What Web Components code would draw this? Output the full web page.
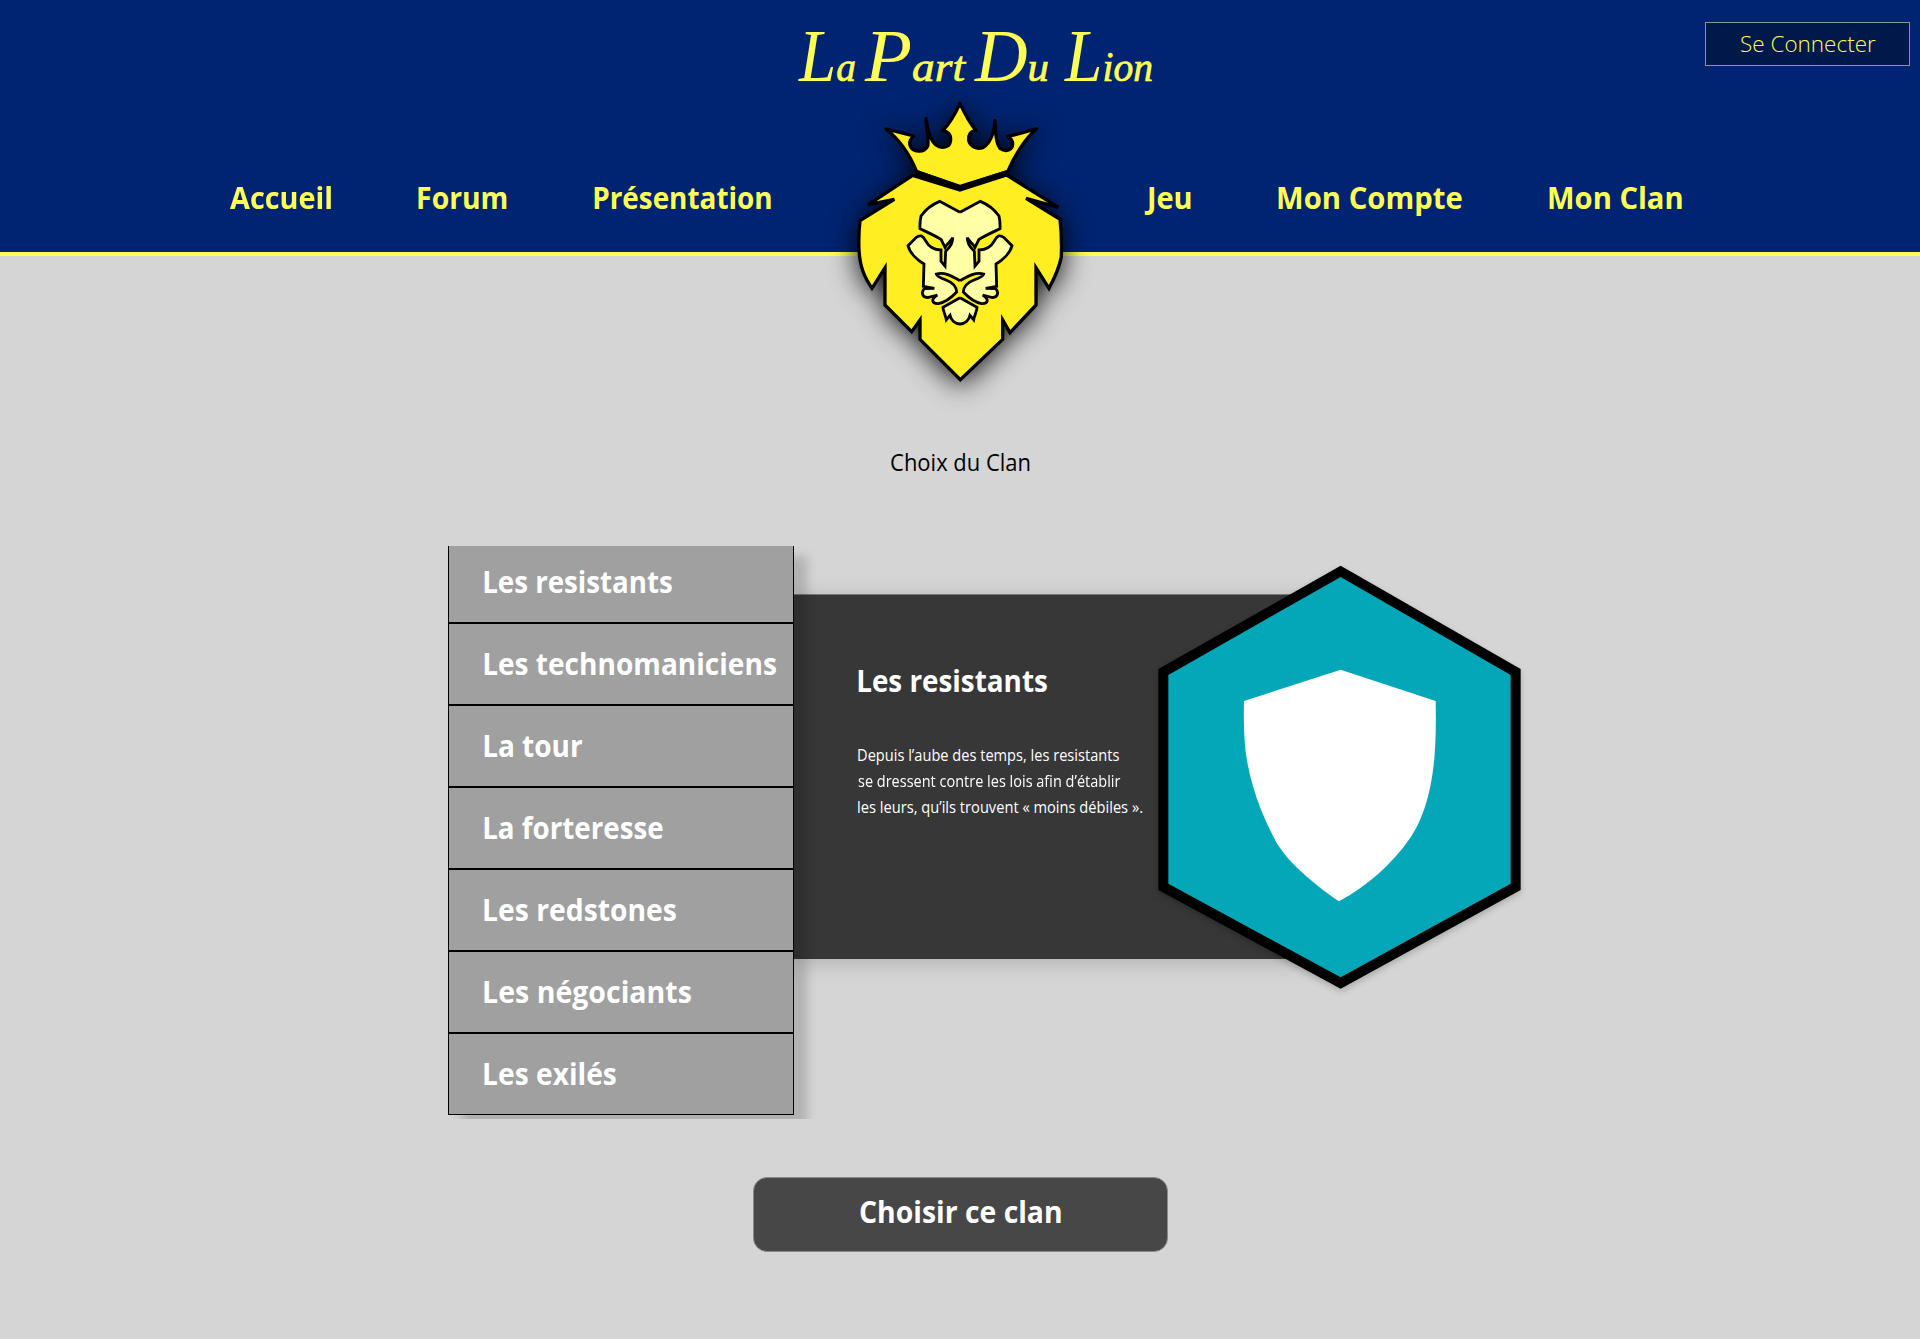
<!DOCTYPE html>
<html lang="fr">
<head>
<meta charset="utf-8">
<title>La Part Du Lion</title>
<style>
body{margin:0;background:#d5d5d5;font-family:"Open Sans","Noto Sans",sans-serif}
</style>
</head>
<body>
<lion-page></lion-page>
<script>
const ctx = document.createElement('canvas').getContext('2d');

// One line of text whose ink is fitted to the width given in "w".
class FitText extends HTMLElement {
  connectedCallback() {
    const root = this.attachShadow({mode: 'open'});
    const w = +this.getAttribute('w');
    root.innerHTML = `<style>
      :host{display:block;flex:none;width:${w}px;white-space:pre;line-height:40px}
      span{display:inline-block;transform-origin:0 50%}
    </style><span><slot></slot></span>`;
    const cs = getComputedStyle(this);
    ctx.font = `${cs.fontWeight} ${cs.fontSize} ${cs.fontFamily}`;
    const m = ctx.measureText(this.textContent);
    const k = w / (m.actualBoundingBoxRight + m.actualBoundingBoxLeft);
    root.querySelector('span').style.transform =
      `translateX(${m.actualBoundingBoxLeft * k}px) scaleX(${k})`;
  }
}

class LionTitle extends HTMLElement {
  connectedCallback() {
    this.attachShadow({mode: 'open'}).innerHTML = `<style>
      :host{display:block;flex:none;width:356px;height:100px}
      svg{display:block;overflow:visible}
      text{font:italic 400 43px "Liberation Serif",serif;fill:#ffff55;stroke:#ffff55;stroke-width:.7}
      .c{font-size:73px;stroke-width:0}
    </style>
    <svg width="356" height="100">
      <text x="2" y="81" textLength="57" lengthAdjust="spacingAndGlyphs"><tspan class="c">L</tspan>a</text>
      <text x="68" y="81" textLength="100" lengthAdjust="spacingAndGlyphs"><tspan class="c">P</tspan>art</text>
      <text x="178" y="81" textLength="74" lengthAdjust="spacingAndGlyphs"><tspan class="c">D</tspan>u</text>
      <text x="268" y="81" textLength="88" lengthAdjust="spacingAndGlyphs"><tspan class="c">L</tspan>ion</text>
    </svg>`;
  }
}

class LionCrest extends HTMLElement {
  connectedCallback() {
    this.attachShadow({mode: 'open'}).innerHTML = `<style>
      :host{display:block;width:240px;height:310px}
      svg{display:block;overflow:visible;filter:drop-shadow(0 4px 14px rgba(0,0,0,.9))}
    </style>
    <svg width="240" height="310" viewBox="0 0 720 930" stroke="#000" stroke-linejoin="miter">
      <path fill="#ffee22" stroke-width="10" d="M360 300L500 255L655 352L558 325L660 388C665 430 665 470 664 500C657 538 642 567 627 595L588 533L588 645L510 728L488 690L488 748L361 869L240 748L240 690L215 725L135 645L135 533L96 595C72 560 60 530 57 480C55 440 58 410 60 392L163 328L85 344L218 256Z"/>
      <path fill="#ffee22" stroke-width="10" stroke-linejoin="round" d="M138 117L221 138C214 144 206 152 210 166C218 188 253 190 263 168C268 148 258 110 258 86C264 120 270 150 288 165C306 178 329 170 331 155C335 136 326 125 308 122C330 100 350 62 360 40C370 62 390 100 408 122C392 122 384 135 386 151C390 168 410 180 430 172C452 158 462 130 465 92C467 130 468 160 480 175C500 189 519 178 518 160C517 150 510 143 503 140C530 133 560 125 590 116C555 145 522 200 503 245L360 291L230 245C209 193 180 150 138 117Z"/>
      <path fill="none" stroke-width="15" d="M229 247L360 292L503 247"/>
      <g transform="translate(165 300)" fill="#ffffa6" stroke-width="8.5">
        <g id="half">
          <path d="M195 67L134 34C112 43 91 59 78 78Q74 96 75 116C100 128 122 138 138 148L150 172C156 160 168 155 173 143C174 165 160 175 152 184L150 228L138 214L138 180C110 180 99 166 91 151C83 136 75 134 64 142L39 167C45 190 68 211 87 222L85 289L118 295L88 296C77 307 82 325 101 322L127 315C106 328 111 342 130 341C150 337 170 322 185 306C184 288 169 276 153 270C134 263 125 257 124 252C148 245 170 258 195 272"/>
          <path d="M195 323L144 352C144 365 152 376 154 389L165 376C168 391 180 402 195 402"/>
        </g>
        <use href="#half" transform="translate(390 0) scale(-1 1)"/>
      </g>
    </svg>`;
  }
}

class SiteHeader extends HTMLElement {
  connectedCallback() {
    this.attachShadow({mode: 'open'}).innerHTML = `<style>
      :host{display:block;position:relative;height:252px;background:#002472;border-bottom:4px solid #ffff55;color:#ffff55}
      .top{display:flex;height:178px;padding:0 10px 0 797px;box-sizing:border-box}
      .login{box-sizing:border-box;width:205px;height:44px;margin:22px 0 0 auto;border:1px solid #8f949c;background:#00184a;
        display:flex;align-items:center;justify-content:center;font-size:22.5px;font-weight:300;padding:0 0 0 1px}
      nav{display:flex;padding:0 238px 0 230px;justify-content:space-between;font-size:30px;font-weight:700}
      nav div{display:flex;gap:87px}
      lion-crest{position:absolute;left:840px;top:90px;z-index:2}
    </style>
    <div class="top"><lion-title></lion-title><div class="login"><fit-text w="135">Se Connecter</fit-text></div></div>
    <nav>
      <div><fit-text w="101">Accueil</fit-text><fit-text w="89">Forum</fit-text><fit-text w="177">Présentation</fit-text></div>
      <div><fit-text w="47">Jeu</fit-text><fit-text w="184">Mon Compte</fit-text><fit-text w="133">Mon Clan</fit-text></div>
    </nav>
    <lion-crest></lion-crest>`;
  }
}

class ClanList extends HTMLElement {
  connectedCallback() {
    const clans = [['Les resistants',188],['Les technomaniciens',292],['La tour',98],['La forteresse',179],
      ['Les redstones',192],['Les négociants',207],['Les exilés',132]];
    this.attachShadow({mode: 'open'}).innerHTML = `<style>
      :host{display:block;flex:none;width:372px;height:573px;overflow:hidden;position:relative;z-index:1}
      ul{margin:-5px 0 0;padding:0;list-style:none;width:346px;box-shadow:13px 15px 10px rgba(0,0,0,.17)}
      li{box-sizing:border-box;height:82px;border:1px solid #000;background:#a0a0a0;padding:0 0 0 35px;
        display:flex;align-items:center;color:#fff;font-size:30px;font-weight:700}
    </style><ul>${clans.map(([n, w]) => `<li><fit-text w="${w}">${n}</fit-text></li>`).join('')}</ul>`;
  }
}

class ClanBadge extends HTMLElement {
  connectedCallback() {
    this.attachShadow({mode: 'open'}).innerHTML = `<style>
      :host{display:block;width:420px;height:460px}
      svg{display:block;overflow:visible;filter:drop-shadow(0 3px 3px rgba(0,0,0,.2))}
    </style>
    <svg width="420" height="460" viewBox="0 0 1260 1380">
      <path d="M632 47L1172 357V1020L632 1316L85 1020V357Z"/>
      <path fill="#03a7b8" d="M632 81L1142 375V1001L632 1282L115 1001V375Z"/>
      <path fill="#fff" d="M632 359L917 453C920 600 914 750 842 862C788 941 712 1008 627 1054C545 998 473 935 438 875C395 795 359 700 347 605C341 555 341 500 342 453Z"/>
    </svg>`;
  }
}

class ClanPanel extends HTMLElement {
  connectedCallback() {
    this.attachShadow({mode: 'open'}).innerHTML = `<style>
      :host{display:block;position:relative;box-sizing:border-box;width:547px;height:365px;margin:48px 0 0 -26px;padding:66px 0 0 64px;
        background:#373737;border-top:1px solid #777;box-shadow:0 4px 20px rgba(0,0,0,.17);color:#fff}
      .h{font-size:30px;font-weight:700}
      .p{font-size:15.5px;margin-top:41px}
      .p fit-text{line-height:26px}
      clan-badge{position:absolute;left:336px;top:-45px}
    </style>
    <fit-text class="h" w="189">Les resistants</fit-text>
    <div class="p"><fit-text w="261">Depuis l’aube des temps, les resistants</fit-text><fit-text w="263">se dressent contre les lois afin d’établir</fit-text><fit-text w="284">les leurs, qu’ils trouvent « moins débiles ».</fit-text></div>
    <clan-badge></clan-badge>`;
  }
}

class LionPage extends HTMLElement {
  connectedCallback() {
    this.attachShadow({mode: 'open'}).innerHTML = `<style>
      :host{display:flex;flex-direction:column;width:1920px;height:1339px;overflow:hidden;background:#d5d5d5}
      .lead{margin:186px 0 0 891px;font-size:23px;color:#000;height:40px}
      main{display:flex;align-items:flex-start;margin:64px 0 0 448px;height:573px}
      .choose{box-sizing:border-box;width:415px;height:75px;margin:58px 0 0 753px;border:1px solid #8a8a8a;border-radius:14px;
        background:#474747;color:#fff;font-size:30px;font-weight:700;display:flex;align-items:center;justify-content:center;padding-bottom:5px}
      .choose,.lead,main,site-header{flex:none}
    </style>
    <site-header></site-header>
    <div class="lead"><fit-text w="139">Choix du Clan</fit-text></div>
    <main><clan-list></clan-list><clan-panel></clan-panel></main>
    <div class="choose"><fit-text w="201">Choisir ce clan</fit-text></div>`;
  }
}

customElements.define('fit-text', FitText);
customElements.define('lion-title', LionTitle);
customElements.define('lion-crest', LionCrest);
customElements.define('site-header', SiteHeader);
customElements.define('clan-list', ClanList);
customElements.define('clan-badge', ClanBadge);
customElements.define('clan-panel', ClanPanel);
customElements.define('lion-page', LionPage);
</script>
</body>
</html>
